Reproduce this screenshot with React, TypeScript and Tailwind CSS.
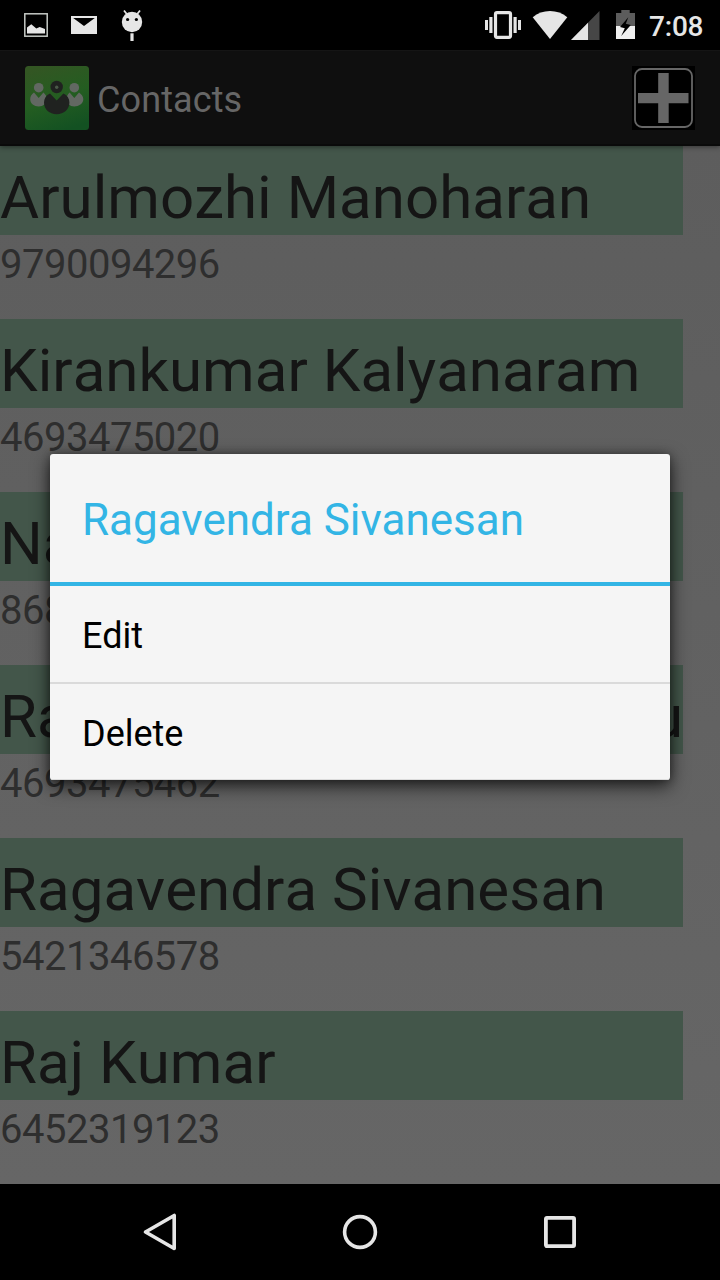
import React from "react";

type Contact = { name: string; tail?: string; phone: string };

const contacts: Contact[] = [
  { name: "Arulmozhi Manoharan", phone: "9790094296" },
  { name: "Kirankumar Kalyanaram", phone: "4693475020" },
  { name: "Na", phone: "868" },
  { name: "Ra", tail: "u", phone: "4693475462" },
  { name: "Ragavendra Sivanesan", phone: "5421346578" },
  { name: "Raj Kumar", phone: "6452319123" },
];

function StatusBar() {
  return (
    <header className="flex h-[50px] shrink-0 items-center justify-between bg-black">
      <svg className="ml-5 h-[50px] w-[130px]" viewBox="20 0 130 50" fill="#e6e6e6">
        <rect x="24.8" y="13.8" width="22.4" height="22.4" fill="none" stroke="#c5c9c5" strokeWidth="1.5" />
        <path d="M27 33.5V27.5l4.3-3.3 5 4.2 3.4-1.4 5.3 2v4.5z" />
        <path d="M71 16h26v18H71z" />
        <path d="M73.2 18h21.6L84 26z" fill="#000" />
        <circle cx="132" cy="22" r="10.2" />
        <path d="M124 10.5l3.5 4.5M140 10.5l-3.5 4.5" stroke="#e6e6e6" strokeWidth="1.8" />
        <circle cx="127.6" cy="19.5" r="1.6" fill="#000" />
        <circle cx="136.4" cy="19.5" r="1.6" fill="#000" />
        <path d="M130.4 33.3h3.2V41h-3.2z" />
      </svg>
      <div className="flex items-center">
        <svg className="h-[50px] w-[170px]" viewBox="480 0 170 50" fill="#e6e6e6">
          <rect x="495.5" y="12.7" width="15" height="24.6" rx="1.5" fill="none" stroke="#e6e6e6" strokeWidth="3.2" />
          <path d="M489.3 17h3.2v16h-3.2zM485 20h3v10h-3zM513.5 17h3.2v16h-3.2zM518 20h3v10h-3z" />
          <path d="M532.7 17.2C542 9 558 9 567.3 17.2L550 39z" />
          <path d="M599.5 11v29H571z" fill="#464646" />
          <path d="M588 22.7V40h-17z" />
          <path d="M616 13h5.3v-3h8.4v3h5.3v13h-19z" fill="#5c5c5c" />
          <path d="M616 26h19v13h-19z" fill="#f0f0f0" />
          <path d="M628.3 17.2L620 27l4.8 1.2-3.6 7.8 9.6-11-5-1.2z" fill="#000" />
        </svg>
        <span className="w-[70px] pt-[3px] text-[28px] font-medium leading-[50px] tracking-[-0.2px] text-[#e6e6e6]">
          <span className="-ml-px">7:08</span>
        </span>
      </div>
    </header>
  );
}

function AppIcon() {
  return (
    <svg className="h-16 w-16" viewBox="0 0 64 64">
      <defs>
        <linearGradient id="leaf" x1="0.3" y1="0" x2="0.65" y2="1">
          <stop offset="0" stopColor="#335623" />
          <stop offset="0.5" stopColor="#245d21" />
          <stop offset="1" stopColor="#135122" />
        </linearGradient>
      </defs>
      <rect width="64" height="64" rx="3.5" fill="url(#leaf)" />
      <g fill="#626862">
        <circle cx="13.7" cy="21.7" r="4.8" />
        <circle cx="49.3" cy="21.7" r="4.8" />
        <path d="M9 26.5l4.7 5.5 4.7-5.5c2.2 1.8 3.3 4 3.3 6.8 0 4.5-3.5 7.2-8 7.2s-8.5-2.7-8.5-7.2c0-2.8 1.2-5 3.8-6.8z" />
        <path d="M44.6 26.5l4.7 5.5 4.7-5.5c2.6 1.8 4.3 4 4.3 6.8 0 4.5-4.5 7.2-9 7.2s-7.5-2.7-7.5-7.2c0-2.8.6-5 2.8-6.8z" />
      </g>
      <g fill="#202220">
        <circle cx="31.7" cy="21" r="6.2" />
        <path d="M25 27.5l6.7 7 6.7-7c4 1.8 6 5 6 9 0 7-5.5 11.7-12.7 11.7S19 43.5 19 36.5c0-4 2-7.2 6-9z" />
      </g>
      <circle cx="31.7" cy="21.3" r="1.7" fill="#4a5a48" />
    </svg>
  );
}

function ActionBar() {
  return (
    <div className="z-10 flex h-24 shrink-0 items-center justify-between border-t border-b-2 border-t-[#151515] border-b-[#0a0a0a] bg-[#0f0f0f] pl-[25px] pr-[25px] shadow-[0_1px_5px_rgba(0,0,0,0.45)]">
      <div className="flex items-center gap-2">
        <AppIcon />
        <h1 className="pt-1 text-[36px] leading-10 tracking-[0.1px] text-[#666666]">Contacts</h1>
      </div>
      <button aria-label="Add contact" className="flex">
        <svg className="h-16 w-[63px]" viewBox="632 66 63 64">
          <path d="M632 66h63v64h-63z" fill="#000" />
          <rect x="635" y="69" width="57" height="58" rx="7" fill="none" stroke="#666" strokeWidth="1.8" />
          <path d="M658.2 73h10.5v20H688.5v10.3H668.7V123h-10.5V103.3H638V93h20.2z" fill="#666" />
        </svg>
      </button>
    </div>
  );
}

function ContactRow({ name, tail, phone }: Contact) {
  return (
    <li className="h-[173px]">
      <div className="flex h-[89px] w-[683px] justify-between whitespace-nowrap bg-[#43564a] pt-4 text-[60px] leading-[72px] tracking-[0.04px] text-[#151515] [font-kerning:none]">
        <span>{name}</span>
        {tail && <span>{tail}</span>}
      </div>
      <p className="pt-1.5 text-[40px] leading-[48px] tracking-[-0.5px] text-[#2e2e2e]">{phone}</p>
    </li>
  );
}

function ContextMenu() {
  return (
    <div
      role="dialog"
      className="absolute left-[50px] top-[454px] z-20 flex h-[326px] w-[620px] flex-col overflow-hidden rounded-[3px] bg-[#f5f5f5] shadow-[0_6px_18px_rgba(0,0,0,0.7),0_0_8px_rgba(0,0,0,0.3)]"
    >
      <h2 className="h-[132px] border-b-4 border-[#33b5e5] px-8 text-[44px] leading-[133px] text-[#33b5e5]">
        Ragavendra Sivanesan
      </h2>
      <button className="h-[98px] border-b-2 border-[#dadada] px-8 text-left text-[36px] leading-[98px] text-black">
        <span className="relative top-px">Edit</span>
      </button>
      <button className="h-24 border-b border-[#dcdcdc] px-8 text-left text-[36px] leading-[98px] text-black">
        <span className="relative top-px">Delete</span>
      </button>
    </div>
  );
}

function NavigationBar() {
  return (
    <nav className="flex h-24 shrink-0 items-center justify-center gap-[152px] bg-black">
      <svg className="size-12" viewBox="0 0 48 48" fill="none" stroke="#e6e6e6" strokeWidth="3.6" strokeLinejoin="round">
        <path d="M9.5 24L38.2 7.5v33z" />
      </svg>
      <svg className="size-12" viewBox="0 0 48 48" fill="none" stroke="#e6e6e6" strokeWidth="3.6">
        <circle cx="24" cy="24" r="15.4" />
      </svg>
      <svg className="size-12" viewBox="0 0 48 48" fill="none" stroke="#e6e6e6" strokeWidth="3.8">
        <rect x="9.9" y="9.9" width="28.2" height="28.2" rx="1" />
      </svg>
    </nav>
  );
}

export default function App() {
  return (
    <div className="relative flex h-[1280px] w-[720px] flex-col overflow-hidden bg-black font-['Roboto',sans-serif]">
      <StatusBar />
      <ActionBar />
      <ul className="h-[1038px] overflow-hidden bg-linear-to-b from-[#5d5d5d] to-[#666666]">
        {contacts.map((contact) => (
          <ContactRow key={contact.phone} {...contact} />
        ))}
      </ul>
      <NavigationBar />
      <ContextMenu />
    </div>
  );
}
